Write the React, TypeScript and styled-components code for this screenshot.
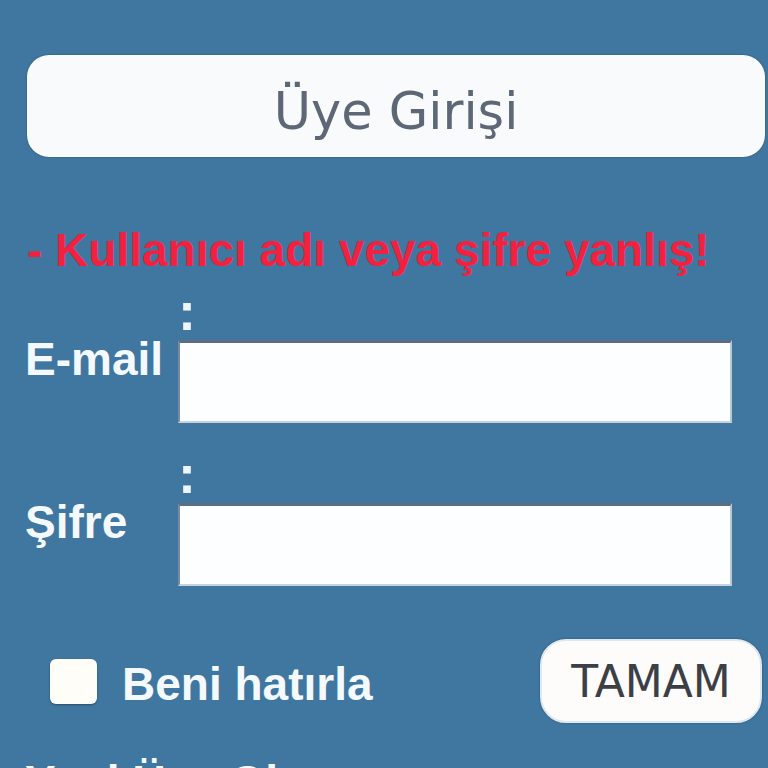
import React from "react";
import styled, { createGlobalStyle } from "styled-components";

const Global = createGlobalStyle`
  html, body {
    margin: 0;
    padding: 0;
    background: #3f77a1;
    overflow: hidden;
  }
  * { box-sizing: border-box; }
`;

const Page = styled.div`
  width: 768px;
  height: 768px;
  overflow: hidden;
  background: #3f77a1;
  padding: 55px 3px 0 25px;
  font-family: "Liberation Sans", Arial, sans-serif;
`;

const Header = styled.div`
  margin-left: 2px;
  height: 102px;
  border-radius: 22px;
  background: #f8fafc;
  box-shadow: 0 0 2px rgba(20, 40, 60, 0.45);
  display: flex;
  align-items: center;
  justify-content: center;
  padding-top: 11px;
  font-family: "DejaVu Sans", Verdana, sans-serif;
  font-size: 51px;
  color: #5d6776;
`;

const ErrorText = styled.div`
  margin: 70px 0 0 2px;
  font-size: 46px;
  line-height: 46px;
  font-weight: bold;
  color: #f2213f;
  white-space: nowrap;
`;

const Row = styled.div<{ $gap: number }>`
  display: flex;
  margin-top: ${(p) => p.$gap}px;
`;

const Label = styled.div`
  width: 153px;
  padding-top: 51px;
  font-size: 46px;
  line-height: 46px;
  font-weight: bold;
  color: #f3f9fd;
  white-space: nowrap;
`;

const Field = styled.div`
  display: flex;
  flex-direction: column;
`;

const Colon = styled.div`
  height: 55px;
  font-size: 54px;
  line-height: 52px;
  font-weight: bold;
  color: #eef6fc;
  padding-left: 0;
`;

const Input = styled.input`
  width: 554px;
  height: 83px;
  background: #fdfeff;
  border: none;
  border-top: 3px solid #5e6e7e;
  border-left: 2px solid #7b8b9b;
  border-right: 2px solid #b9c8d4;
  border-bottom: 2px solid #c7d3dc;
  outline: none;
  font-size: 40px;
  padding: 0 10px;
`;

const Bottom = styled.div`
  display: flex;
  align-items: center;
  margin-top: 53px;
  padding-right: 3px;
`;

const Check = styled.span`
  width: 47px;
  height: 45px;
  margin-left: 25px;
  border-radius: 6px;
  background: #fffdf8;
  box-shadow: 0 1px 2px rgba(30, 40, 50, 0.5);
  flex: none;
`;

const CheckLabel = styled.span`
  margin-left: 25px;
  margin-top: 6px;
  font-size: 46px;
  line-height: 46px;
  font-weight: bold;
  color: #f3f9fd;
  flex: 1;
`;

const Button = styled.button`
  width: 222px;
  height: 84px;
  border-radius: 26px;
  border: 2px solid #dfe8ef;
  background: #fdfcfa;
  box-shadow: 0 0 2px rgba(20, 40, 60, 0.5);
  font-family: "DejaVu Sans", Verdana, sans-serif;
  font-size: 44px;
  color: #3c4046;
  padding: 0;
  display: flex;
  align-items: center;
  justify-content: center;
`;

const NewMember = styled.div`
  margin-top: 36px;
  font-size: 46px;
  line-height: 46px;
  font-weight: bold;
  color: #f3f9fd;
`;

export default function App() {
  return (
    <>
      <Global />
      <Page>
        <Header>Üye Girişi</Header>
        <ErrorText>- Kullanıcı adı veya şifre yanlış!</ErrorText>
        <Row $gap={12}>
          <Label>E-mail</Label>
          <Field>
            <Colon>:</Colon>
            <Input type="text" />
          </Field>
        </Row>
        <Row $gap={25}>
          <Label>Şifre</Label>
          <Field>
            <Colon>:</Colon>
            <Input type="password" />
          </Field>
        </Row>
        <Bottom>
          <Check />
          <CheckLabel>Beni hatırla</CheckLabel>
          <Button>TAMAM</Button>
        </Bottom>
        <NewMember>Yeni Üye Ol</NewMember>
      </Page>
    </>
  );
}
